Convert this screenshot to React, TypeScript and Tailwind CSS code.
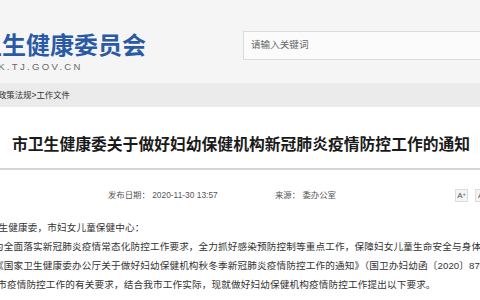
import React from 'react';

const FONT = { fontFamily: '"Liberation Sans", "Noto Sans CJK SC", sans-serif' };

const FontButton: React.FC<{ sign: string }> = ({ sign }) => (
  <div className="flex-none w-[13px] h-[13px] border border-[#dcdcdc] bg-[#f4f4f4] flex items-start justify-center pt-[1px] text-[8px] leading-[10px] text-[#555]">
    A<span className="text-[5px] leading-[6px]">{sign}</span>
  </div>
);

const App: React.FC = () => {
  return (
    <div className="w-[480px] h-[300px] overflow-hidden bg-white" style={FONT}>
      {/* header */}
      <div className="h-[83px] bg-[#f5f5f5] flex items-start overflow-hidden">
        <div className="flex-none w-[243px] overflow-hidden pt-[34px]">
          <div className="ml-[-94px] whitespace-nowrap text-[24px] leading-[24px] font-bold text-[#2a5aa6]">
            天津市卫生健康委员会
          </div>
          <div className="ml-[-29px] mt-[3px] whitespace-nowrap text-[9.6px] leading-[12px] tracking-[2.3px] text-[#6a6a6a]">
            WSJK.TJ.GOV.CN
          </div>
        </div>
        <div className="flex-none w-[300px] h-[29px] mt-[31px] border border-[#dcdcdc] bg-[#fbfbfb] flex items-center pl-[7px]">
          <span className="text-[9.6px] text-[#666]">请输入关键词</span>
        </div>
      </div>

      {/* breadcrumb */}
      <div className="h-[24px] bg-[#ebebeb] flex items-center overflow-hidden">
        <span className="ml-[-2px] whitespace-nowrap text-[8.4px] text-[#333]">政策法规&gt;工作文件</span>
      </div>

      {/* title */}
      <div className="pt-[30px] pl-[12px] whitespace-nowrap text-[15.8px] leading-[16px] font-bold text-[#1a1a1a]">
        市卫生健康委关于做好妇幼保健机构新冠肺炎疫情防控工作的通知
      </div>
      <div className="mt-[15px] h-[2px] bg-[#d6d6d6]" />

      {/* meta */}
      <div className="mt-[18px] h-[14px] flex items-center pl-[108px] text-[8.4px] text-[#555] whitespace-nowrap">
        <span className="flex-none w-[167px]">发布日期：&nbsp;2020-11-30 13:57</span>
        <span className="flex-none w-[180px]">来源：&nbsp;委办公室</span>
        <div className="flex gap-[7px]">
          <FontButton sign="+" />
          <FontButton sign="-" />
        </div>
      </div>

      {/* body */}
      <div className="mt-[15.5px] text-[9.6px] leading-[19px] tracking-[0.15px] text-[#333] whitespace-nowrap overflow-hidden">
        <div className="ml-[-30.8px]">各区卫生健康委，市妇女儿童保健中心：</div>
        <div className="ml-[-6px]">为全面落实新冠肺炎疫情常态化防控工作要求，全力抓好感染预防控制等重点工作，保障妇女儿童生命安全与身体健康，根据</div>
        <div className="ml-[-6px]">《国家卫生健康委办公厅关于做好妇幼保健机构秋冬季新冠肺炎疫情防控工作的通知》（国卫办妇幼函〔2020〕879号）和本</div>
        <div className="ml-[-12.6px]">本市疫情防控工作的有关要求，结合我市工作实际，现就做好妇幼保健机构疫情防控工作提出以下要求。</div>
      </div>
    </div>
  );
};

export default App;
